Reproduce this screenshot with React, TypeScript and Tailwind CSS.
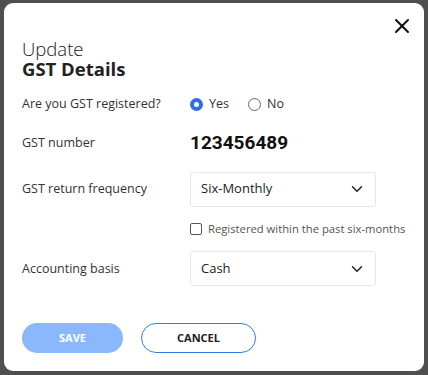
import React, { useState } from 'react';
import { X, ChevronDown } from 'lucide-react';

const FONT = { fontFamily: '"Open Sans", "Liberation Sans", sans-serif' };

function Select({ value }: { value: string }) {
    return (
        <div className="flex h-[35px] w-[186px] items-center justify-between rounded-[3px] border border-[#e3e6ec] bg-white pl-[10px] pr-[9px] text-[13px] text-[#222]">
            <span>{value}</span>
            <ChevronDown size={18} strokeWidth={2} className="text-[#222]" />
        </div>
    );
}

export default function App() {
    const [registered, setRegistered] = useState(true);

    return (
        <div className="flex h-[375px] w-[428px] bg-[#4f4f4f] px-[4px] pb-[4px] pt-[3px]" style={FONT}>
            <div className="flex w-full flex-col rounded-[9px] bg-white pl-[18px] pr-[10px]">
                {/* header */}
                <div className="flex justify-end pt-[11px]">
                    <X size={24} strokeWidth={2} className="text-[#111]" />
                </div>
                <div className="mt-[1px] text-[18.5px] leading-[20px] text-[#222]">
                    <div className="font-light">Update</div>
                    <div className="font-bold">GST Details</div>
                </div>

                {/* form */}
                <div className="mt-[15px] grid grid-cols-[168px_1fr] items-center text-[12.5px] text-[#333]">
                    <div className="h-[20px] leading-[20px]">Are you GST registered?</div>
                    <div className="flex items-center gap-[6px]">
                        <button onClick={() => setRegistered(true)} className="flex items-center gap-[6px]">
                            <span className={`h-[13px] w-[13px] rounded-full ${registered ? 'border-[4px] border-[#2f6fe4]' : 'border border-[#666]'}`} />
                            <span>Yes</span>
                        </button>
                        <button onClick={() => setRegistered(false)} className="ml-[13px] flex items-center gap-[6px]">
                            <span className={`h-[13px] w-[13px] rounded-full ${!registered ? 'border-[4px] border-[#2f6fe4]' : 'border border-[#666]'}`} />
                            <span>No</span>
                        </button>
                    </div>

                    <div className="mt-[15px]">GST number</div>
                    <div className="mt-[15px] text-[19px] font-bold text-[#111]" style={{ fontFamily: '"Roboto", "Liberation Sans", sans-serif' }}>123456489</div>

                    <div className="mt-[14px]">GST return frequency</div>
                    <div className="mt-[14px]"><Select value="Six-Monthly" /></div>

                    <div />
                    <label className="mt-[14px] flex items-center gap-[6px] text-[11.25px] text-[#555]">
                        <span className="h-[12px] w-[12px] rounded-[2px] border border-[#555]" />
                        Registered within the past six-months
                    </label>

                    <div className="mt-[14px]">Accounting basis</div>
                    <div className="mt-[14px]"><Select value="Cash" /></div>
                </div>

                {/* actions */}
                <div className="mt-[37px] flex gap-[18px]">
                    <button className="h-[30px] w-[101px] rounded-full bg-[#89b8fd] text-[11px] font-bold text-white">SAVE</button>
                    <button className="h-[30px] w-[115px] rounded-full border border-[#2f7be0] text-[11px] font-bold text-[#222]">CANCEL</button>
                </div>
            </div>
        </div>
    );
}
